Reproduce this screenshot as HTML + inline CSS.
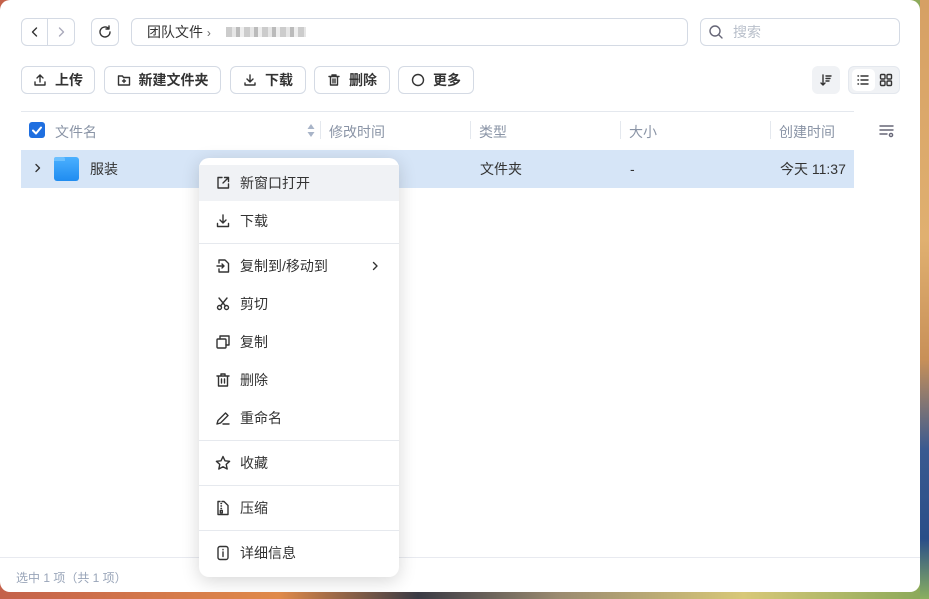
<!DOCTYPE html>
<html><head><meta charset="utf-8"><style>
*{box-sizing:border-box;margin:0;padding:0}
body{width:929px;height:599px;overflow:hidden;position:relative;font-family:"Liberation Sans","Noto Sans CJK SC",sans-serif;background:linear-gradient(90deg,#c4614a 0%,#e08a4a 30%,#3a3a44 45%,#9a8a70 60%,#d8c878 80%,#88a858 100%)}
.rs{position:absolute;left:920px;top:0;width:9px;height:599px;background:linear-gradient(180deg,#d6a064 0%,#e0b070 40%,#c89058 60%,#3a5a90 75%,#2a4e88 90%,#8ab060 100%)}
.win{position:absolute;left:0;top:0;width:920px;height:592px;background:#fff;border-radius:10px;overflow:hidden}
.b{position:absolute;border:1px solid #d4dae4;border-radius:6px;background:#fff}
.t{position:absolute;font-size:14px;color:#333;white-space:nowrap;line-height:16px}
svg{position:absolute;fill:none;stroke:#333;stroke-width:1.4;stroke-linecap:round;stroke-linejoin:round}
.btn{position:absolute;top:66px;height:28px;border:1px solid #d4dae4;border-radius:6px;font-size:14px;color:#333;display:flex;align-items:center;justify-content:center;gap:8px;font-weight:bold}
.btn svg{position:static}
.h{position:absolute;top:122px;font-size:14px;color:#8a94a6}
.sep{position:absolute;top:121px;width:1px;height:18px;background:#e4e8ee}
.menu{position:absolute;left:199px;top:158px;width:200px;height:419px;background:#fff;border-radius:10px;box-shadow:0 4px 18px rgba(0,0,0,.16)}
.mi{position:absolute;left:0;width:200px;height:36px}
.mi .t{left:41px;top:10px}
.mi svg{left:16px;top:10px}
.dv{position:absolute;left:0;width:200px;height:1px;background:#e6e9ee}
</style></head><body>
<div class="rs"></div>
<div class="win">
<!-- nav -->
<div class="b" style="left:21px;top:18px;width:54px;height:28px"></div>
<div style="position:absolute;left:47px;top:19px;width:1px;height:26px;background:#d4dae4"></div>
<svg style="left:28px;top:25px" width="14" height="14"><path d="M8.5 3L4.5 7l4 4"/></svg>
<svg style="left:54px;top:25px" width="14" height="14"><path stroke="#aab" d="M5.5 3l4 4-4 4"/></svg>
<div class="b" style="left:91px;top:18px;width:28px;height:28px"></div>
<svg style="left:97px;top:24px" width="16" height="16"><path d="M13 8a5 5 0 1 1-1.5-3.6M12 2v3h-3"/></svg>
<div class="b" style="left:131px;top:18px;width:557px;height:28px"></div>
<div class="t" style="left:147px;top:24px">团队文件 <span style="color:#666;font-size:12px">›</span></div>
<div style="position:absolute;left:226px;top:27px;width:80px;height:10px;background:repeating-linear-gradient(90deg,#ccc 0 6px,#e6e6e6 6px 10px,#bbb 10px 14px,#eee 14px 18px)"></div>
<div class="b" style="left:700px;top:18px;width:200px;height:28px"></div>
<svg style="left:708px;top:24px" width="16" height="16"><circle cx="7" cy="7" r="5" stroke="#667"/><path stroke="#667" d="M11 11l3 3"/></svg>
<div class="t" style="left:733px;top:24px;color:#b8bfca">搜索</div>
<!-- toolbar -->
<div class="btn" style="left:21px;width:74px"><svg width="14" height="14"><path d="M7 9V2M4 5l3-3 3 3M2 9v3h10V9"/></svg>上传</div>
<div class="btn" style="left:104px;width:117px"><svg width="14" height="14"><path d="M1.5 3h4l1 1.5h6v7.5h-11zM7 6.5v3M5.5 8h3"/></svg>新建文件夹</div>
<div class="btn" style="left:230px;width:76px"><svg width="14" height="14"><path d="M7 2v7M4 6l3 3 3-3M2 10v2h10v-2"/></svg>下载</div>
<div class="btn" style="left:314px;width:76px"><svg width="14" height="14"><path d="M2 3.5h10M5 3.5V2h4v1.5M3.5 3.5v8.5h7V3.5M6 6v4M8 6v4"/></svg>删除</div>
<div class="btn" style="left:398px;width:76px"><svg width="14" height="14"><circle cx="7" cy="7" r="5.5"/></svg>更多</div>
<div style="position:absolute;left:812px;top:66px;width:28px;height:28px;border-radius:6px;background:#f0f2f5"></div>
<svg style="left:819px;top:73px" width="14" height="14"><path d="M4 2v10M2 10l2 2 2-2M7 3h5M7 5.5h4M7 8h3"/></svg>
<div style="position:absolute;left:848px;top:66px;width:52px;height:28px;border-radius:6px;background:#f0f2f5;border:1px solid #e4e8ee"></div>
<div style="position:absolute;left:852px;top:69px;width:23px;height:22px;border-radius:5px;background:#fff"></div>
<svg style="left:856px;top:73px" width="14" height="14"><path d="M2 3h.5M2 7h.5M2 11h.5M5 3h7M5 7h7M5 11h7"/></svg>
<svg style="left:879px;top:73px" width="14" height="14"><rect x="1.5" y="1.5" width="4.5" height="4.5" rx="1"/><rect x="8" y="1.5" width="4.5" height="4.5" rx="1"/><rect x="1.5" y="8" width="4.5" height="4.5" rx="1"/><rect x="8" y="8" width="4.5" height="4.5" rx="1"/></svg>
<div style="position:absolute;left:21px;top:111px;width:833px;height:1px;background:#e4e8ee"></div>
<!-- header -->
<div style="position:absolute;left:29px;top:122px;width:16px;height:16px;border-radius:3px;background:#1f6fe0"></div>
<svg style="left:29px;top:122px;stroke:#fff;stroke-width:2" width="16" height="16"><path d="M4 8.5l3 3 5-6"/></svg>
<div class="h" style="left:55px">文件名</div>
<svg style="left:306px;top:122px;stroke:none;fill:#a8b4c8" width="10" height="16"><path d="M5 2l3.5 5h-7zM5 15l3.5-5h-7z"/></svg>
<div class="sep" style="left:320px"></div><div class="h" style="left:329px">修改时间</div>
<div class="sep" style="left:470px"></div><div class="h" style="left:479px">类型</div>
<div class="sep" style="left:620px"></div><div class="h" style="left:629px">大小</div>
<div class="sep" style="left:770px"></div><div class="h" style="left:779px">创建时间</div>
<svg style="left:879px;top:124px;stroke:#667" width="16" height="14"><path d="M1 2h13M1 6h13M1 10h7"/><circle cx="12" cy="11" r="1.6"/></svg>
<!-- row -->
<div style="position:absolute;left:21px;top:150px;width:833px;height:38px;background:#d6e5f7"></div>
<svg style="left:32px;top:162px" width="12" height="12"><path d="M4 2.5l3.5 3.5-3.5 3.5"/></svg>
<div style="position:absolute;left:54px;top:157px;width:25px;height:24px;border-radius:3px;background:linear-gradient(180deg,#4bb0ff,#1f8cf0)"></div>
<div style="position:absolute;left:54px;top:157px;width:11px;height:4px;border-radius:2px 2px 0 0;background:#6cc0ff"></div>
<div class="t" style="left:90px;top:161px">服装</div>
<div class="t" style="left:480px;top:161px">文件夹</div>
<div class="t" style="left:630px;top:161px">-</div>
<div class="t" style="left:780px;top:161px">今天 11:37</div>
<!-- footer -->
<div style="position:absolute;left:0;top:557px;width:920px;height:1px;background:#e8eaf0"></div>
<div style="position:absolute;left:16px;top:569px;font-size:12px;color:#98a4b8">选中 1 项（共 1 项）</div>
<!-- menu -->
<div class="menu">
<div class="mi" style="top:7px;background:#f0f2f5"><svg width="16" height="16"><path d="M7 2.5H3v10.5h10.5V9M9.5 2.5h4v4M13.5 2.5L8 8"/></svg><div class="t">新窗口打开</div></div>
<div class="mi" style="top:45px"><svg width="16" height="16"><path d="M8 2v8M5 7l3 3 3-3M2.5 10.5v3h11v-3"/></svg><div class="t">下载</div></div>
<div class="dv" style="top:85px"></div>
<div class="mi" style="top:90px"><svg width="16" height="16"><path d="M4 5V2h6l3.5 3.5V14H4v-3M2 8h7M7 6l2 2-2 2"/></svg><div class="t">复制到/移动到</div><svg style="left:168px" width="16" height="16"><path d="M6.5 4.5l3.5 3.5-3.5 3.5"/></svg></div>
<div class="mi" style="top:128px"><svg width="16" height="16"><circle cx="4.5" cy="11.5" r="2"/><circle cx="11.5" cy="11.5" r="2"/><path d="M5.5 10L12 2M10.5 10L4 2"/></svg><div class="t">剪切</div></div>
<div class="mi" style="top:166px"><svg width="16" height="16"><rect x="2" y="5" width="9" height="9" rx="1"/><path d="M5 5V2h9v9h-3"/></svg><div class="t">复制</div></div>
<div class="mi" style="top:204px"><svg width="16" height="16"><path d="M2 4h12M6 4V2h4v2M3.5 4v10h9V4M6.5 7v4M9.5 7v4"/></svg><div class="t">删除</div></div>
<div class="mi" style="top:242px"><svg width="16" height="16"><path d="M2 14l1-3.5L10.5 3l2.5 2.5L5.5 13zM8 14h6"/></svg><div class="t">重命名</div></div>
<div class="dv" style="top:282px"></div>
<div class="mi" style="top:287px"><svg width="16" height="16"><path d="M8 1.5l2 4.3 4.6.5-3.4 3.1 1 4.6L8 11.7 3.8 14l1-4.6L1.4 6.3 6 5.8z"/></svg><div class="t">收藏</div></div>
<div class="dv" style="top:327px"></div>
<div class="mi" style="top:332px"><svg width="16" height="16"><path d="M5 1.5H3v13h10V5.5L9 1.5H7M6 3.5h.5M6 6h.5M6 8.5h.5"/><rect x="5.3" y="10.5" width="2" height="2.5"/></svg><div class="t">压缩</div></div>
<div class="dv" style="top:372px"></div>
<div class="mi" style="top:377px"><svg width="16" height="16"><rect x="3" y="1.5" width="10" height="13" rx="2"/><path d="M8 7v4.5M8 4.5v.3"/></svg><div class="t">详细信息</div></div>
</div>
</div>
</body></html>
